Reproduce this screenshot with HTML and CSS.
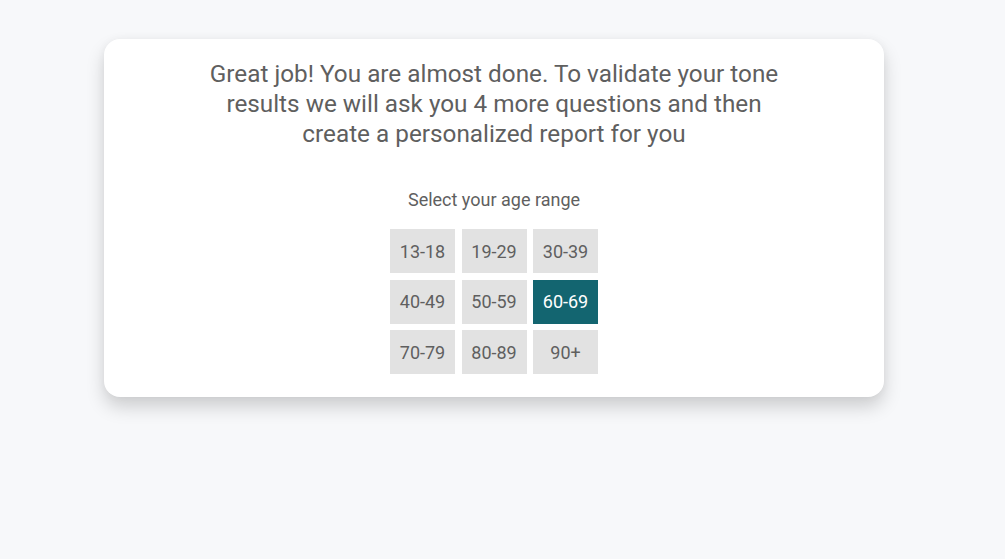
FILE: index.html
```html
<!DOCTYPE html>
<html>
<head>
<meta charset="utf-8">
<link rel="stylesheet" href="styles.css">
</head>
<body>
<div class="card">
  <h1 class="title">Great job! You are almost done. To validate your tone results we will ask you 4 more questions and then create a personalized report for you</h1>
  <p class="label">Select your age range</p>
  <div class="grid">
    <button class="opt">13-18</button>
    <button class="opt">19-29</button>
    <button class="opt">30-39</button>
    <button class="opt">40-49</button>
    <button class="opt">50-59</button>
    <button class="opt selected">60-69</button>
    <button class="opt">70-79</button>
    <button class="opt">80-89</button>
    <button class="opt">90+</button>
  </div>
</div>
</body>
</html>
```

FILE: styles.css
```css
html, body {
  margin: 0;
  padding: 0;
  background: #f7f8fa;
  font-family: Roboto, "Liberation Sans", sans-serif;
}
body {
  padding-top: 39px;
  min-height: 100vh;
  box-sizing: border-box;
}
.card {
  margin-left: 104px;
  width: 780px;
  height: 358px;
  box-sizing: border-box;
  background: #fff;
  border-radius: 16px;
  box-shadow: 0 10px 18px rgba(0, 0, 0, 0.17), 0 0 8px rgba(0, 0, 0, 0.04);
  padding-top: 20px;
  display: flex;
  flex-direction: column;
  align-items: center;
}
.title {
  margin: 0;
  width: 585px;
  font-size: 24.3px;
  font-weight: 400;
  line-height: 30px;
  color: #5f5f5f;
  text-align: center;
}
.label {
  margin: 39px 0 0;
  font-size: 18px;
  line-height: 24px;
  color: #5f5f5f;
}
.grid {
  margin-top: 17px;
  display: grid;
  grid-template-columns: repeat(3, 65px);
  grid-auto-rows: 44px;
  column-gap: 6.5px;
  row-gap: 6.5px;
}
.opt {
  border: 0;
  margin: 0;
  padding: 0;
  background: #e2e2e2;
  color: #5f5f5f;
  font-family: Roboto, "Liberation Sans", sans-serif;
  font-size: 18px;
}
.opt.selected {
  background: #136570;
  color: #fff;
}
```
